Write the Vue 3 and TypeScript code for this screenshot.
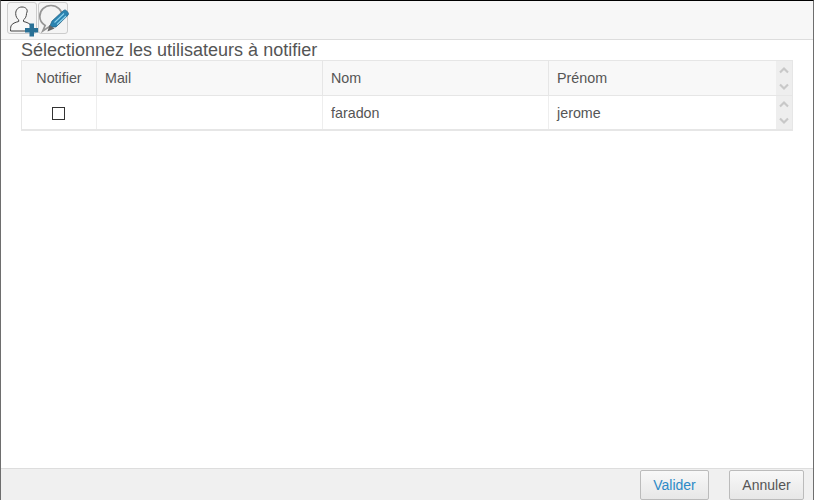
<template>
  <div class="window">
    <div class="toolbar">
      <button class="tool" type="button" title="Ajouter un utilisateur">
        <svg width="28" height="30" viewBox="0 0 28 30">
          <path d="M14 4c-3.800 0-6.300 2.700-6.300 6.400 0 2.900 1.200 5.200 3 6.500v1.600c-3.300.8-6.600 2-7.600 4.300-.6 1.500-.6 4-.5 5.200h21c.1-1.200.1-3.700-.5-5.200-1-2.300-4.300-3.500-7.600-4.300v-1.600c1.800-1.300 3-3.600 3-6.500C20.500 6.700 17.800 4 14 4z" fill="#f8f8f8" stroke="#444" stroke-width="1" />
          <path d="M21.500 20.500h4.500v4.500h4.500v4.500H26v4h-4.500v-4H17V25h4.500z" fill="#2a7196" />
        </svg>
      </button>
      <button class="tool" type="button" title="Modifier le message">
        <svg width="28" height="30" viewBox="0 0 28 30">
          <path d="M12 2.500C5.600 2.500.8 7.300.8 13.200c0 4 2.100 7.300 5.400 9.200L3.800 28l7-4.700h1.200c6.400 0 11.200-4.300 11.200-10.100S18.400 2.500 12 2.500z" fill="#f3f3f3" stroke="#959595" stroke-width="1.700" />
          <path d="M10.500 24l2.500-6L24.500 7.500c1-.8 2.200-.7 3 .2l1.500 1.800c.7.900.7 2-.2 2.900L17 24z" fill="#2b83b0" stroke="#1c5f82" stroke-width=".7" />
          <path d="M15.500 19.500l9.500-9M18 21.500l9-8.500" stroke="#8ed2ec" stroke-width="1.100" fill="none" />
          <path d="M8.500 28.500l2-6.500 5 3.500z" fill="#666" />
        </svg>
      </button>
    </div>

    <main class="content">
      <h1 class="title">Sélectionnez les utilisateurs à notifier</h1>
      <div class="grid">
        <div class="row head">
          <div class="cell center">Notifier</div>
          <div class="cell">Mail</div>
          <div class="cell">Nom</div>
          <div class="cell">Prénom</div>
          <div class="arrows">
            <svg width="12" height="8" viewBox="0 0 12 8"><path d="M2 6.500L6 2.500l4 4" /></svg>
            <svg width="12" height="8" viewBox="0 0 12 8"><path d="M2 1.500L6 5.500l4-4" /></svg>
          </div>
        </div>
        <div v-for="user in users" :key="user.nom" class="row body">
          <div class="cell center"><span class="check"></span></div>
          <div class="cell">{{ user.mail }}</div>
          <div class="cell">{{ user.nom }}</div>
          <div class="cell">{{ user.prenom }}</div>
          <div class="arrows">
            <svg width="12" height="8" viewBox="0 0 12 8"><path d="M2 6.500L6 2.500l4 4" /></svg>
            <svg width="12" height="8" viewBox="0 0 12 8"><path d="M2 1.500L6 5.500l4-4" /></svg>
          </div>
        </div>
      </div>
    </main>

    <div class="footer">
      <button class="btn primary" type="button">Valider</button>
      <button class="btn" type="button">Annuler</button>
    </div>
  </div>
</template>

<script setup lang="ts">
interface User {
  mail: string;
  nom: string;
  prenom: string;
}

const users: User[] = [{ mail: '', nom: 'faradon', prenom: 'jerome' }];
</script>

<style>
html,
body {
  margin: 0;
  background: #fff;
}
</style>

<style scoped>
.window {
  box-sizing: border-box;
  width: 814px;
  height: 500px;
  display: flex;
  flex-direction: column;
  border: 1px solid #6e6e6e;
  border-top-color: #000;
  border-bottom: 0;
  font-family: "Liberation Sans", Arial, sans-serif;
  font-size: 14px;
  color: #555;
  background: #fff;
}

.toolbar {
  flex: none;
  height: 37px;
  display: flex;
  align-items: flex-start;
  gap: 1px;
  padding: 1px 0 0 6px;
  background: #f7f7f7;
  border-bottom: 1px solid #ddd;
}

.tool {
  width: 30px;
  height: 32px;
  padding: 0;
  display: flex;
  align-items: center;
  justify-content: center;
  border: 1px solid #ccc;
  border-radius: 3px;
  background: #f4f4f4;
}

.tool svg {
  overflow: visible;
}

.content {
  flex: 1;
  padding: 0 20px;
}

.title {
  margin: 0;
  font-size: 18px;
  line-height: 20px;
  font-weight: 400;
  color: #555;
}

.grid {
  border: 1px solid #e6e6e6;
  border-bottom-width: 2px;
  width: 772px;
  box-sizing: border-box;
  font-size: 14.3px;
}

.row {
  display: grid;
  grid-template-columns: 75px 226px 226px 227px 16px;
}

.row.head {
  height: 34px;
  background: #f8f8f8;
  border-bottom: 1px solid #e6e6e6;
}

.row.body {
  height: 33px;
}

.cell {
  display: flex;
  align-items: center;
  padding: 0 8px;
  border-right: 1px solid #eee;
  overflow: hidden;
}

.head .cell {
  border-right-color: #e6e6e6;
}

.cell:nth-child(4) {
  border-right: 0;
}

.center {
  justify-content: center;
  padding: 0;
}

.check {
  width: 11px;
  height: 11px;
  margin: 1px 1px 0 0;
  border: 1px solid #333;
  background: #fff;
}

.arrows {
  display: flex;
  flex-direction: column;
  align-items: center;
  justify-content: center;
  gap: 9px;
  background: #eeeeee;
}

.arrows svg {
  display: block;
}

.arrows path {
  fill: none;
  stroke: #c8c8c8;
  stroke-width: 2.200;
}

.footer {
  flex: none;
  height: 31px;
  display: flex;
  justify-content: flex-end;
  gap: 20px;
  padding-right: 9px;
  background: #f0f0f0;
  border-top: 1px solid #ddd;
}

.btn {
  width: 69px;
  height: 30px;
  margin-top: 1px;
  padding: 0;
  font: inherit;
  color: #555;
  border: 1px solid #bbb;
  border-radius: 2px;
  background: linear-gradient(#f8f8f8, #e7e7e7);
}

.btn:last-child {
  width: 75px;
}

.btn.primary {
  color: #2d8ac7;
}
</style>
